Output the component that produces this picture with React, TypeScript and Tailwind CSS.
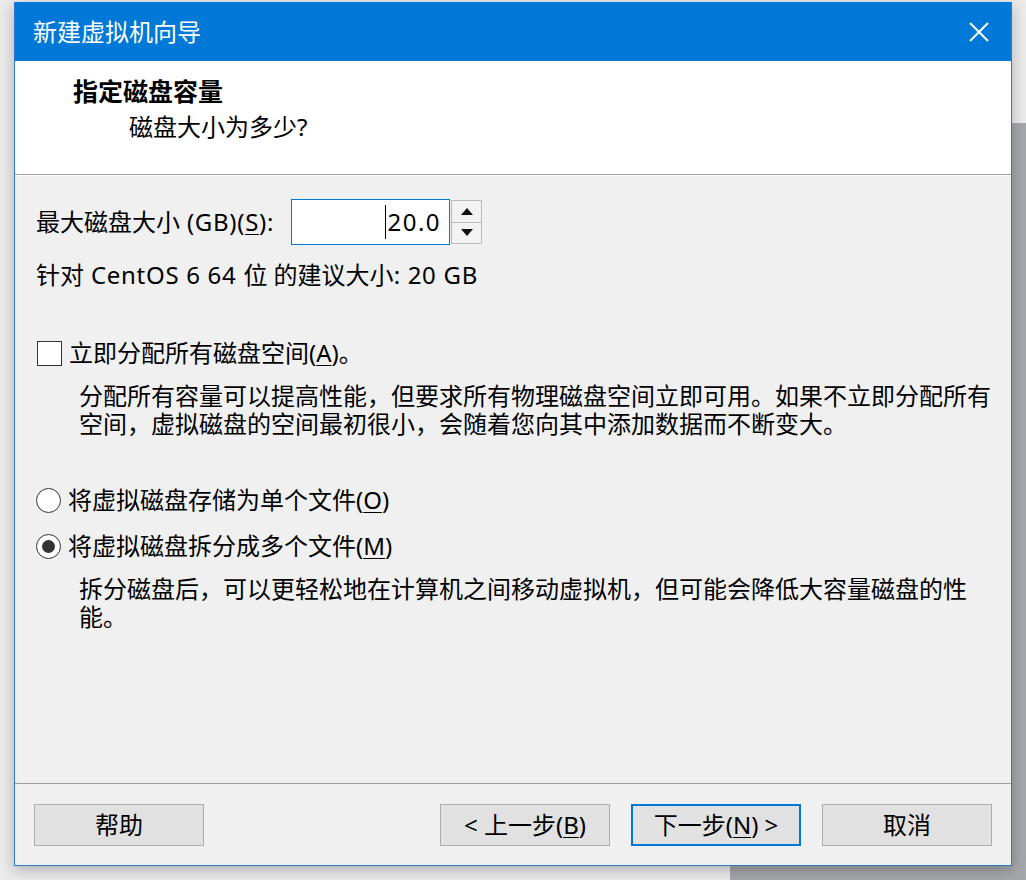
import React from 'react'

const font = "font-['Noto_Sans','Noto_Sans_CJK_SC',sans-serif]"

function U({ children }: { children: React.ReactNode }) {
  return <span className="underline underline-offset-[3px] decoration-1">{children}</span>
}

// latin runs in the reference are a touch wider than Noto Sans
function L({ children }: { children: React.ReactNode }) {
  return <span className="tracking-[0.7px]">{children}</span>
}

function Button({ children, primary }: { children: React.ReactNode; primary?: boolean }) {
  return (
    <div
      className={
        'flex h-[42px] w-[170px] items-center justify-center bg-[#e1e1e1] text-[24px] text-black ' +
        (primary ? 'border-2 border-[#0078d7]' : 'border border-[#adadad]')
      }
    >
      {children}
    </div>
  )
}

function Spinner() {
  return (
    <div className="ml-[1px] flex h-[44px] w-[31px] flex-col border border-[#b9b9b9] bg-[#f3f3f3]">
      <div className="flex flex-1 items-center justify-center border-b border-[#b9b9b9]">
        <svg width="12" height="7" viewBox="0 0 12 7">
          <path d="M0 7 L6 0 L12 7 Z" fill="#111" />
        </svg>
      </div>
      <div className="flex flex-1 items-center justify-center">
        <svg width="12" height="7" viewBox="0 0 12 7">
          <path d="M0 0 L6 7 L12 0 Z" fill="#111" />
        </svg>
      </div>
    </div>
  )
}

function Radio({ checked }: { checked?: boolean }) {
  return (
    <div className="flex h-[25px] w-[25px] items-center justify-center rounded-full border-[1.5px] border-[#333] bg-white">
      {checked && <div className="h-[13px] w-[13px] rounded-full bg-[#333]" />}
    </div>
  )
}

export default function App() {
  return (
    <div className={`relative h-[880px] w-[1026px] overflow-hidden bg-[#ebebeb] ${font}`}>
      <div className="absolute bottom-0 left-[730px] right-0 top-[123px] bg-[#a6a7aa]" />

      <div className="absolute left-[14px] top-[2px] flex h-[864px] w-[998px] flex-col border-x border-b border-[#2b79d0] bg-[#f0f0f0] shadow-[0_4px_14px_rgba(0,0,0,0.25)]">
        {/* title bar */}
        <div className="flex h-[59px] items-center justify-between bg-[#0078d7] pl-[18px] text-[24px] text-white">
          <span>新建虚拟机向导</span>
          <svg className="mr-[22px]" width="20" height="20" viewBox="0 0 20 20">
            <path d="M1 1 L19 19 M19 1 L1 19" stroke="#fff" strokeWidth="2" />
          </svg>
        </div>

        {/* header */}
        <div className="flex h-[114px] flex-col border-b border-[#a0a0a0] bg-white pl-[58px] pt-[13px]">
          <div className="text-[25px] font-bold leading-[34px] text-black">指定磁盘容量</div>
          <div className="ml-[56px] mt-[2px] text-[24px] leading-[34px] text-black">磁盘大小为多少?</div>
        </div>

        {/* body */}
        <div className="flex flex-1 flex-col border-t border-white pl-[21px] pt-[23px] text-[24px] text-black">
          <div className="flex items-center">
            <span className="leading-[32px]">
              最大磁盘大小<L> (GB)(<U>S</U>):</L>
            </span>
            <div className="ml-[17px] flex h-[46px] w-[159px] items-center justify-end border-[1.5px] border-[#0078d7] bg-white pr-[8px]">
              <span className="mr-[1px] h-[34px] w-[1.5px] bg-black" />
              <span className="leading-[32px] tracking-[1.5px]">20.0</span>
            </div>
            <Spinner />
          </div>

          <div className="mt-[14px] leading-[32px]">
            针对<L> CentOS 6 64 </L>位 的建议大小<L>: 20 GB</L>
          </div>

          <div className="mt-[46px] flex items-center">
            <div className="ml-[1px] h-[25px] w-[25px] border-[1.5px] border-[#333] bg-white" />
            <span className="ml-[7px] leading-[32px]">
              立即分配所有磁盘空间(<U>A</U>)。
            </span>
          </div>
          <div className="ml-[43px] mt-[13px] leading-[28px]">
            <div>分配所有容量可以提高性能，但要求所有物理磁盘空间立即可用。如果不立即分配所有</div>
            <div>空间，虚拟磁盘的空间最初很小，会随着您向其中添加数据而不断变大。</div>
          </div>

          <div className="mt-[46px] flex items-center">
            <Radio />
            <span className="ml-[7px] leading-[32px]">
              将虚拟磁盘存储为单个文件(<U>O</U>)
            </span>
          </div>
          <div className="mt-[14px] flex items-center">
            <Radio checked />
            <span className="ml-[7px] leading-[32px]">
              将虚拟磁盘拆分成多个文件(<U>M</U>)
            </span>
          </div>
          <div className="ml-[43px] mt-[13px] leading-[28px]">
            <div>拆分磁盘后，可以更轻松地在计算机之间移动虚拟机，但可能会降低大容量磁盘的性</div>
            <div>能。</div>
          </div>
        </div>

        {/* footer */}
        <div className="flex h-[82px] items-start justify-between border-t border-[#a0a0a0] px-[19px] pt-[20px]">
          <Button>帮助</Button>
          <div className="flex gap-[21px]">
            <Button>
              &lt; 上一步(<U>B</U>)
            </Button>
            <Button primary>
              下一步(<U>N</U>) &gt;
            </Button>
            <Button>取消</Button>
          </div>
        </div>
      </div>
    </div>
  )
}
